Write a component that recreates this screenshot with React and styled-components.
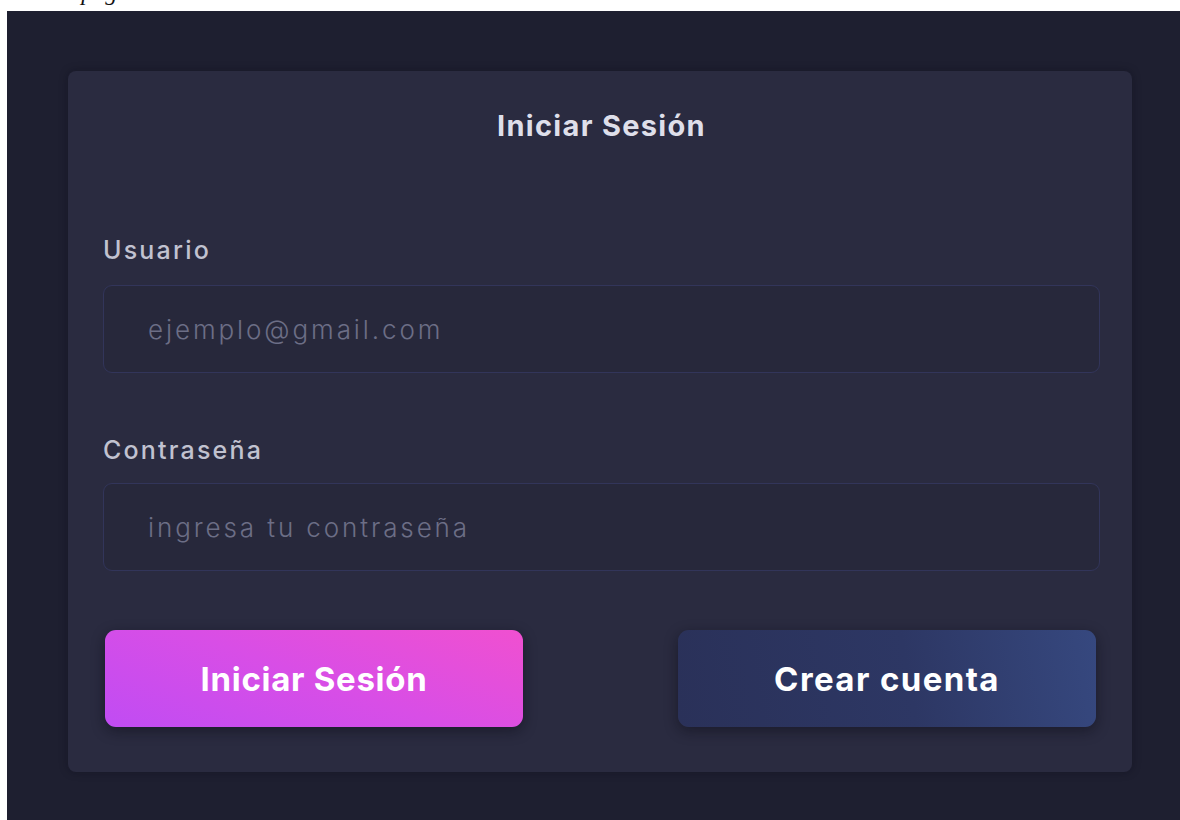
import styled, { createGlobalStyle } from "styled-components";

const GlobalStyle = createGlobalStyle`
  body {
    margin: 0;
    background: #ffffff;
    font-family: "Inter", "Noto Sans", sans-serif;
  }
`

const Caption = styled.div`
  height: 11px;
  overflow: hidden;
  font-family: "Liberation Serif", serif;
  font-style: italic;
  font-size: 24px;
  line-height: 24px;
  color: #111111;
  white-space: nowrap;

  p {
    margin: 0 0 0 4px;
    transform: translateY(-20px);
  }
`

const Frame = styled.main`
  margin-left: 7px;
  min-height: 809px;
  background: #1e1f30;
  padding: 60px 48px 0 61px;
  box-sizing: border-box;
`

const Card = styled.section`
  display: flex;
  flex-direction: column;
  background: #2a2b40;
  border-radius: 8px;
  padding: 40px 32px 45px 35px;
  box-shadow: 0 0 8px rgba(10, 10, 20, 0.35);
`

const Title = styled.h1`
  margin: 0 0 97px;
  text-align: center;
  font-size: 29px;
  line-height: 30px;
  font-weight: 700;
  letter-spacing: 1.3px;
  color: #dedfea;
`

const Label = styled.label`
  font-size: 25px;
  line-height: 24px;
  font-weight: 500;
  letter-spacing: 2.2px;
  color: #c1c2d0;
  margin-bottom: ${({ $gap }) => $gap}px;
`

const Input = styled.input`
  height: 88px;
  box-sizing: border-box;
  width: 100%;
  background: #27283b;
  border: 1px solid #32355a;
  border-radius: 9px;
  padding: 0 44px;
  font-family: inherit;
  font-size: 26px;
  font-weight: 300;
  letter-spacing: 2.9px;
  color: #c4c5d3;
  outline: none;
  margin-bottom: ${({ $gap }) => $gap}px;

  &::placeholder {
    color: #6c6e86;
  }
`

const Actions = styled.div`
  display: flex;
  justify-content: space-between;
  padding: 0 4px 0 2px;
`

const Button = styled.button`
  width: 418px;
  height: 97px;
  border: none;
  border-radius: 11px;
  font-family: inherit;
  font-size: 33px;
  font-weight: 700;
  letter-spacing: ${({ $primary }) => ($primary ? "0.7px" : "1.4px")};
  color: #ffffff;
  cursor: pointer;
  background: ${({ $primary }) =>
    $primary
      ? "linear-gradient(20deg, #c04cf3 0%, #d84ee6 50%, #f050d0 100%)"
      : "linear-gradient(80deg, #2a3159 0%, #2d3764 55%, #36487f 100%)"};
  box-shadow: 0 4px 14px rgba(8, 8, 18, 0.45);
`

const App = () => {
  return (
    <>
      <GlobalStyle />
      <Caption>
        <p>En esta página el usuario inicia sesión</p>
      </Caption>
      <Frame>
        <Card>
          <Title>Iniciar Sesión</Title>
          <Label $gap={23}>Usuario</Label>
          <Input $gap={65} type="email" placeholder="ejemplo@gmail.com" />
          <Label $gap={21}>Contraseña</Label>
          <Input $gap={59} type="password" placeholder="ingresa tu contraseña" />
          <Actions>
            <Button $primary>Iniciar Sesión</Button>
            <Button>Crear cuenta</Button>
          </Actions>
        </Card>
      </Frame>
    </>
  )
}

export default App;
